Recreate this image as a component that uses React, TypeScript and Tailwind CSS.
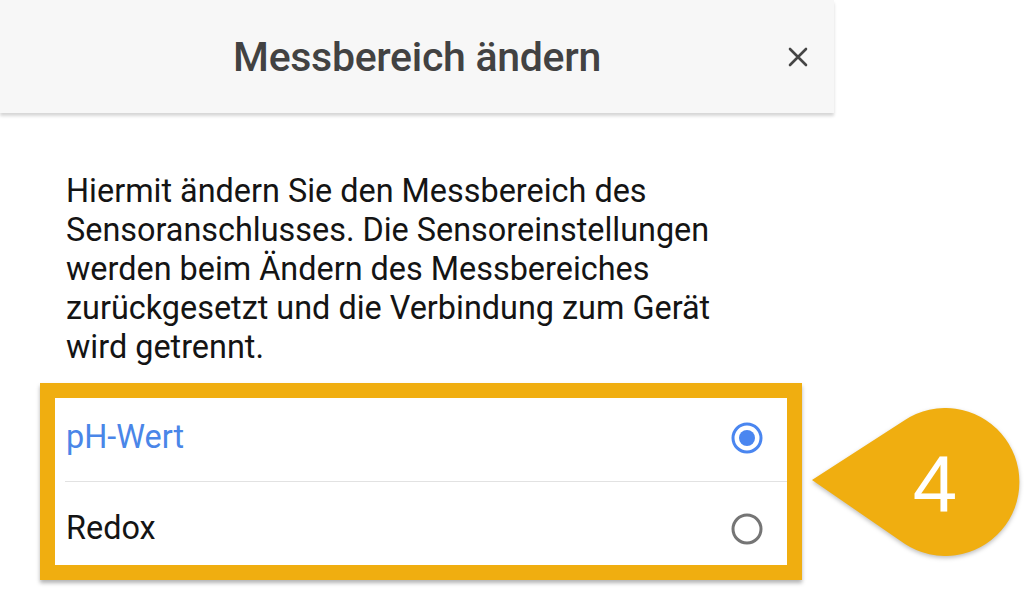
import React from "react";

const Radio = ({ checked }: { checked: boolean }) => (
  <svg width="34" height="34" viewBox="0 0 34 34">
    <circle
      cx="17"
      cy="17"
      r="14"
      fill="none"
      stroke={checked ? "#4a86f0" : "#757575"}
      strokeWidth="3"
    />
    {checked && <circle cx="17" cy="17" r="8" fill="#4a86f0" />}
  </svg>
);

const Callout = () => (
  <svg
    width="212"
    height="152"
    viewBox="0 0 212 152"
    className="ml-[10px] drop-shadow-[0_2px_2px_rgba(0,0,0,0.25)]"
  >
    <path d="M0,74 L93,14 A74,74 0 1 1 93,138 Z" fill="#f0ae10" />
    <text
      x="123"
      y="105"
      textAnchor="middle"
      fill="#ffffff"
      fontSize="80"
      fontFamily="'Liberation Sans', Arial, sans-serif"
    >
      4
    </text>
  </svg>
);

export default function App() {
  return (
    <div
      className="w-[1024px] h-[589px] bg-white overflow-hidden"
      style={{ fontFamily: "Roboto, 'Noto Sans', sans-serif" }}
    >
      {/* header */}
      <div className="w-[834px] h-[113px] bg-[#f7f7f7] shadow-[0_3px_3px_rgba(0,0,0,0.16)] grid grid-cols-[1fr_auto_1fr] items-center">
        <div />
        <h1 className="text-[41px] font-medium text-[#424242] tracking-[-0.3px] pt-[2px]">
          Messbereich ändern
        </h1>
        <div className="flex justify-end pr-[26px] pt-[1px]">
          <svg width="20" height="20" viewBox="0 0 20 20">
            <path
              d="M2,2 L18,18 M18,2 L2,18"
              stroke="#454545"
              strokeWidth="2.6"
              strokeLinecap="round"
            />
          </svg>
        </div>
      </div>

      {/* body */}
      <p className="mt-[59px] pl-[66px] w-[800px] text-[32.4px] leading-[39px] text-[#141414]">
        Hiermit ändern Sie den Messbereich des
        <br />
        Sensoranschlusses. Die Sensoreinstellungen
        <br />
        werden beim Ändern des Messbereiches
        <br />
        zurückgesetzt und die Verbindung zum Gerät
        <br />
        wird getrennt.
      </p>

      <div className="mt-[16px] ml-[40px] flex items-center">
        <div className="w-[762px] border-[15px] border-[#f0ae10] bg-white shadow-[0_3px_4px_rgba(0,0,0,0.3)]">
          <div className="h-[83px] flex items-center justify-between pl-[11px] pr-[23px] pb-[4px]">
            <span className="text-[32.4px] text-[#4a86e8]">pH-Wert</span>
            <Radio checked />
          </div>
          <div className="ml-[10px] h-px bg-[#e2e2e2]" />
          <div className="h-[83px] flex items-center justify-between pl-[11px] pr-[23px] pt-[10px]">
            <span className="text-[32.4px] text-[#141414]">Redox</span>
            <Radio checked={false} />
          </div>
        </div>
        <Callout />
      </div>
    </div>
  );
}
